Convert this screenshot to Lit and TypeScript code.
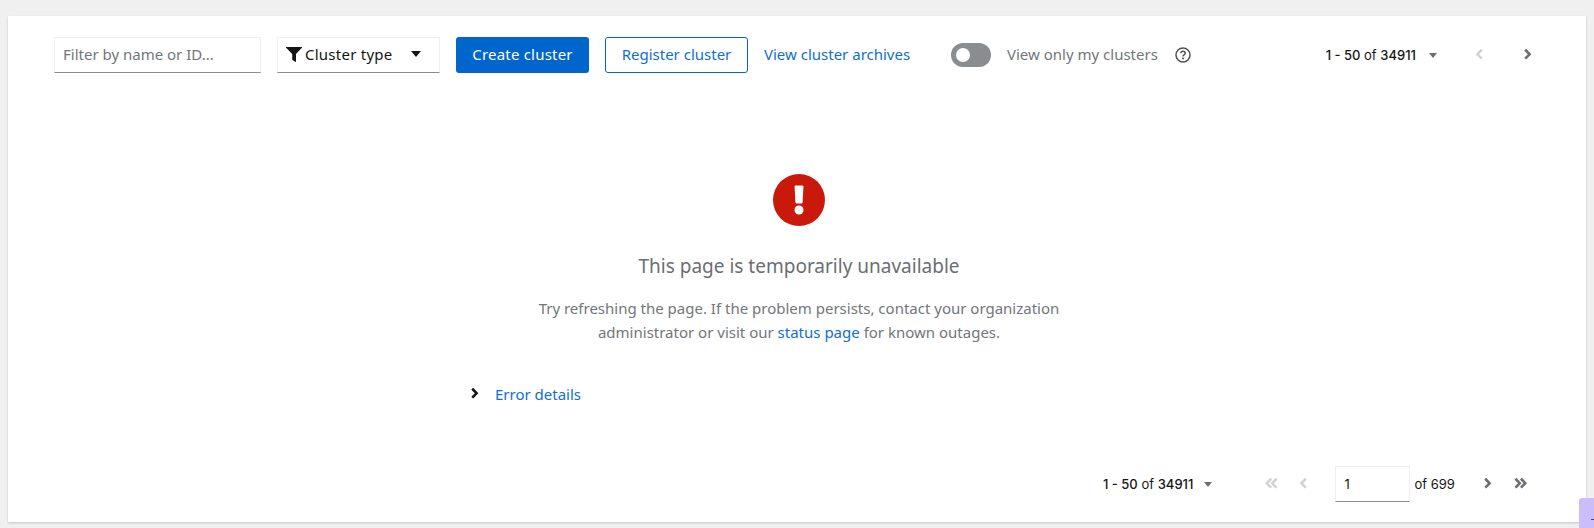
import { LitElement, html, css, svg } from "lit";
import { customElement } from "lit/decorators.js";

const chevR = svg`<path d="M6.2 2.4 4.6 4a.6.6 0 0 0 0 .8L8.8 9l-4.2 4.2a.6.6 0 0 0 0 .8l1.6 1.6a.6.6 0 0 0 .8 0l6-6.2a.6.6 0 0 0 0-.8l-6-6.2a.6.6 0 0 0-.8 0z" transform="translate(0 -1)"/>`;

@customElement("app-root")
export class AppRoot extends LitElement {
  static styles = css`
    :host {
      display: block;
      height: 528px;
      background: #f0f0f0;
      font-family: "Noto Sans", "Open Sans", sans-serif;
      font-size: 15px;
      color: #151515;
      overflow: hidden;
      position: relative;
    }
    * { box-sizing: border-box; }
    .card {
      margin: 16px 8px 0;
      height: 506px;
      background: #fff;
      box-shadow: 0 1px 2px rgba(3, 3, 3, 0.2);
      display: flex;
      flex-direction: column;
    }
    .toolbar {
      display: flex;
      align-items: center;
      height: 36px;
      margin-top: 21px;
      padding-left: 46px;
    }
    .input {
      height: 36px;
      width: 207px;
      border: 1px solid #f0f0f0;
      border-bottom-color: #8a8d90;
      padding: 0 0 2px 8px;
      display: flex;
      align-items: center;
      color: #72767b;
    }
    .select {
      width: 163px;
      height: 36px;
      margin-left: 16px;
      border: 1px solid #f0f0f0;
      border-bottom-color: #8a8d90;
      display: flex;
      align-items: center;
      padding: 0 0 2px 8px;
      letter-spacing: 0.25px;
    }
    .select .funnel { width: 16px; height: 16px; margin-right: 3px; flex: none; }
    .select .caret { margin-left: auto; margin-right: 18px; }
    .btn {
      height: 36px;
      border-radius: 3px;
      display: flex;
      align-items: center;
      justify-content: center;
      margin-left: 16px;
      padding-bottom: 2px;
    }
    .primary { width: 133px; background: #06c; color: #fff; letter-spacing: 0.2px; }
    .secondary { width: 143px; border: 1px solid #06c; color: #0f6fd0; }
    .link { color: #0f6fd0; }
    .archives { margin-left: 16px; width: 147px; white-space: nowrap; padding-bottom: 2px; }
    .toggle {
      width: 40px;
      height: 24px;
      border-radius: 12px;
      background: #8a8d90;
      margin-left: 40px;
      display: flex;
      align-items: center;
      padding-left: 5px;
      flex: none;
    }
    .toggle i { width: 14px; height: 14px; border-radius: 50%; background: #fff; display: block; }
    .tlabel { color: #72767b; margin-left: 16px; width: 152px; white-space: nowrap; padding-bottom: 2px; }
    .help { width: 16px; height: 16px; margin-left: 16px; flex: none; }
    .pg {
      font-family: "Inter", sans-serif;
      font-size: 13px;
      display: flex;
      align-items: center;
    }
    .pg b { font-weight: 500; }
    .pg span.of { font-weight: 400; }
    .count { white-space: nowrap; }
    .mini { margin-left: auto; padding-right: 51px; }
    .small-caret { margin-left: 13px; }
    .chev { width: 14px; height: 14px; fill: #6a6e73; display: block; flex: none; }
    .chev.off { fill: #d2d2d2; }
    .mini .prev { margin-left: 35px; }
    .mini .next { margin-left: 35px; }
    .main {
      flex: 1;
      display: flex;
      flex-direction: column;
      align-items: center;
      padding: 101px 0 0 4px;
    }
    .icon { width: 52px; height: 52px; display: block; }
    h2 {
      margin: 25px 0 0;
      font-size: 19px;
      font-weight: 400;
      line-height: 30px;
      color: #6a6e73;
    }
    .desc {
      margin-top: 15px;
      width: 560px;
      text-align: center;
      color: #72767b;
      line-height: 24px;
    }
    .details {
      width: 672px;
      margin-top: 38px;
      display: flex;
      align-items: center;
      height: 24px;
      padding-left: 5px;
    }
    .details .chev { fill: #151515; }
    .details .link { margin-left: 13px; }
    .bottom { height: 36px; margin: 0 0 20px; padding-left: 1095px; }
    .bottom .small-caret { margin-left: 11px; }
    .bottom .first { margin-left: 53px; }
    .bottom .prev { margin-left: 15px; }
    .page {
      width: 75px;
      height: 36px;
      margin-left: 25px;
      border: 1px solid #f0f0f0;
      border-bottom-color: #8a8d90;
      display: flex;
      align-items: center;
      padding-left: 8px;
      font-weight: 400;
    }
    .total { margin-left: 4px; white-space: nowrap; width: 57px; }
    .bottom .next { margin-left: 10px; }
    .bottom .last { margin-left: 16px; }
    .tab {
      position: absolute;
      left: 1579px;
      top: 498px;
      width: 15px;
      height: 30px;
      background: #cbbdfb;
      border-radius: 3px 0 0 0;
    }
    .tab::after {
      content: "";
      position: absolute;
      left: 12px;
      top: 21px;
      width: 3px;
      height: 1px;
      background: #4a4a5a;
    }
  `;

  caret(fill: string, cls = "", w = 10, h = 6) {
    return html`<svg class=${cls} width=${w} height=${h} viewBox="0 0 10 6"><path d="M0 0h10L5 6z" fill=${fill}/></svg>`;
  }

  chev(dir: "r" | "l", off = false, cls = "") {
    return html`<svg class="chev ${off ? "off" : ""} ${cls}" viewBox="0 0 18 18">
      <g transform=${dir === "l" ? "translate(18 0) scale(-1 1)" : ""}>${chevR}</g>
    </svg>`;
  }

  dbl(dir: "r" | "l", off = false, cls = "") {
    return html`<svg class="chev ${off ? "off" : ""} ${cls}" style="width:16px" viewBox="0 0 20 18">
      <g transform=${dir === "l" ? "translate(20 0) scale(-1 1)" : ""}>
        ${chevR}<g transform="translate(7 0)">${chevR}</g>
      </g>
    </svg>`;
  }

  count() {
    return html`<span class="count"><b>1 - 50</b> <span class="of">of</span> <b>34911</b></span>`;
  }

  render() {
    return html`
      <div class="card">
        <div class="toolbar">
          <div class="input">Filter by name or ID...</div>
          <div class="select">
            <svg class="funnel" viewBox="0 0 16 16"><path d="M.4 1h15.2c.4 0 .6.5.3.8L10 8v7.3c0 .5-.5.8-.9.5l-2.6-1.8a.6.6 0 0 1-.3-.5V8L.1 1.8C-.2 1.5 0 1 .4 1z" fill="#151515"/></svg>
            <span>Cluster type</span>
            ${this.caret("#151515", "caret")}
          </div>
          <div class="btn primary">Create cluster</div>
          <div class="btn secondary">Register cluster</div>
          <span class="link archives">View cluster archives</span>
          <div class="toggle"><i></i></div>
          <span class="tlabel">View only my clusters</span>
          <svg class="help" viewBox="0 0 16 16" fill="none">
            <circle cx="8" cy="8" r="7" stroke="#4f5255" stroke-width="1.5"/>
            <path d="M5.8 6.3C5.9 5 6.8 4.3 8 4.3c1.3 0 2.2.8 2.2 1.9 0 1.8-2.2 1.6-2.2 3.2" stroke="#4f5255" stroke-width="1.5"/>
            <circle cx="8" cy="11.5" r="1" fill="#4f5255"/>
          </svg>
          <div class="pg mini">
            ${this.count()}
            ${this.caret("#6a6e73", "small-caret", 8, 5)}
            ${this.chev("l", true, "prev")}
            ${this.chev("r", false, "next")}
          </div>
        </div>
        <div class="main">
          <svg class="icon" viewBox="0 0 52 52">
            <circle cx="26" cy="26" r="26" fill="#c9190b"/>
            <path d="M22 12h8l-1 17h-6z" fill="#fff" stroke="#fff" stroke-width="1" stroke-linejoin="round"/>
            <circle cx="26" cy="36" r="4.5" fill="#fff"/>
          </svg>
          <h2>This page is temporarily unavailable</h2>
          <div class="desc">
            <div>Try refreshing the page. If the problem persists, contact your organization</div>
            <div>administrator or visit our <span class="link">status page</span> for known outages.</div>
          </div>
          <div class="details">
            ${this.chev("r")}
            <span class="link">Error details</span>
          </div>
        </div>
        <div class="toolbar pg bottom">
          ${this.count()}
          ${this.caret("#6a6e73", "small-caret", 8, 5)}
          ${this.dbl("l", true, "first")}
          ${this.chev("l", true, "prev")}
          <div class="page">1</div>
          <span class="total">of 699</span>
          ${this.chev("r", false, "next")}
          ${this.dbl("r", false, "last")}
        </div>
      </div>
      <div class="tab"></div>
    `;
  }
}
